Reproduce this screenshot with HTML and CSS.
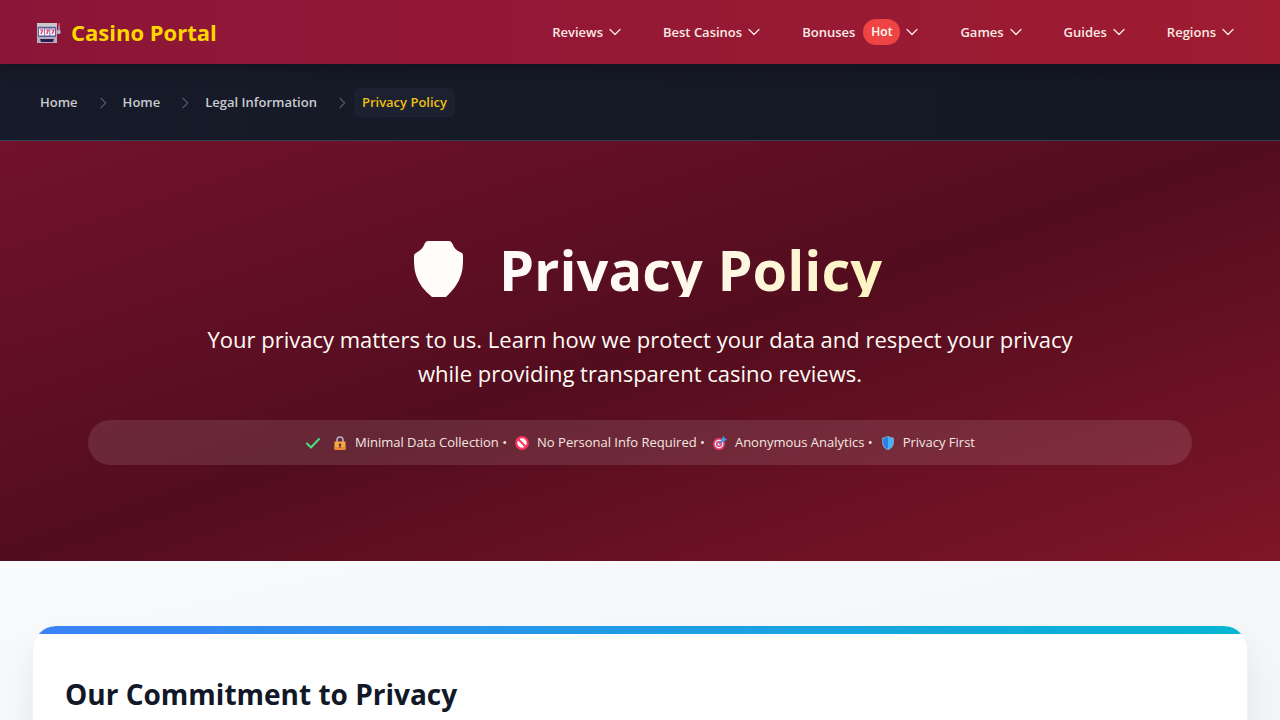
FILE: index.html
```html
<!DOCTYPE html>
<html lang="en">
<head>
<meta charset="utf-8">
<meta name="viewport" content="width=device-width, initial-scale=1">
<title>Privacy Policy - Casino Portal</title>
<link rel="stylesheet" href="styles.css">
</head>
<body>
<svg class="defs" aria-hidden="true">
  <symbol id="down" viewBox="0 0 16 16"><path d="M3 5.500 8 10.500l5-5" fill="none" stroke="currentColor" stroke-width="1.300" stroke-linecap="round" stroke-linejoin="round"/></symbol>
  <symbol id="right" viewBox="0 0 24 24"><path d="m9 5 7 7-7 7" fill="none" stroke="currentColor" stroke-width="2" stroke-linecap="round" stroke-linejoin="round"/></symbol>
</svg>
<header class="header">
  <a class="brand" href="#">
    <svg class="brand-icon" viewBox="0 0 24 22" aria-hidden="true">
      <g transform="translate(0 2)">
      <path d="M20 8h2V2" fill="none" stroke="#a9a3b5" stroke-width="1.500"/>
      <rect x="20" y="7" width="3.500" height="4" rx="1" fill="#b9b3c6"/>
      <circle cx="22" cy="1.500" r="1.500" fill="#e8304f"/>
      <path d="M0 0h20v20H0z" fill="#b3adbd"/>
      <path d="M0 0h20v3H0z" fill="#c9c6cf"/>
      <rect x="1" y="4" width="18" height="10" rx="1" fill="#5a5f99"/>
      <path d="M2 5.500h5v7H2zM7.700 5.500h4.700v7H7.700zM13.200 5.500H18v7h-4.800z" fill="#f6f0fa"/>
      <path d="M3 7h2.700L4 11M8.700 7h2.700l-1.700 4M14.200 7h2.700l-1.700 4" fill="none" stroke="#e8305e" stroke-width="1.200"/>
      <path d="M3 16h14l-1 3H4z" fill="#2c1c52"/>
      </g>
    </svg>
    <span>Casino Portal</span>
  </a>
  <nav class="nav" aria-label="Main">
    <button class="nav-item" type="button">Reviews<svg><use href="#down"/></svg></button>
    <button class="nav-item" type="button">Best Casinos<svg><use href="#down"/></svg></button>
    <button class="nav-item" type="button">Bonuses<span class="hot">Hot</span><svg><use href="#down"/></svg></button>
    <button class="nav-item" type="button">Games<svg><use href="#down"/></svg></button>
    <button class="nav-item" type="button">Guides<svg><use href="#down"/></svg></button>
    <button class="nav-item" type="button">Regions<svg><use href="#down"/></svg></button>
  </nav>
</header>
<nav class="crumbs" aria-label="Breadcrumb">
  <a class="crumb" href="#">Home</a>
  <svg><use href="#right"/></svg>
  <a class="crumb" href="#">Home</a>
  <svg><use href="#right"/></svg>
  <a class="crumb" href="#">Legal Information</a>
  <svg><use href="#right"/></svg>
  <span class="crumb current" aria-current="page">Privacy Policy</span>
</nav>
<main>
  <section class="hero">
    <h1 class="title">
      <svg class="title-shield" viewBox="0 0 49 56" aria-hidden="true"><path d="M14 0h21q2 0 3 2l2 4q1 2 4 4l4 2q1 1 1 3v6q0 14-8 25-3 4-9 10H18Q12 51 8 46 0 35 0 21v-6q0-2 2-3l3-2q3-2 4-4l2-4q1-2 3-2z" fill="#fffcf9"/></svg>
      <span class="title-text">Privacy Policy</span>
    </h1>
    <p class="lead">Your privacy matters to us. Learn how we protect your data and respect your privacy while providing transparent casino reviews.</p>
    <div class="pill">
      <svg class="check" viewBox="0 0 16 16" aria-hidden="true"><path d="m2 8.500 4 4 8-8.500" fill="none" stroke="#4ade80" stroke-width="2" stroke-linecap="round" stroke-linejoin="round"/></svg>
      <ul class="facts">
        <li class="fact"><svg viewBox="0 0 14 14" aria-hidden="true"><path d="M4 7V4a3 3 0 0 1 6 0v3" fill="none" stroke="#b9b0c2" stroke-width="1.600"/><rect x="1.500" y="5.500" width="11" height="8.500" rx="1" fill="#f9a63a"/><path d="M1.500 11h11v2q0 1-1 1h-9q-1 0-1-1z" fill="#ef8a35"/><circle cx="7" cy="8.700" r="1.300" fill="#4c3150"/><path d="M6.400 9h1.200v3H6.400z" fill="#4c3150"/></svg>Minimal Data Collection •</li>
        <li class="fact"><svg viewBox="0 0 14 14" aria-hidden="true"><circle cx="7" cy="7" r="5.800" fill="#fff" stroke="#f8375c" stroke-width="2.200"/><path d="m3 3 8 8" stroke="#f8375c" stroke-width="2.200"/></svg>No Personal Info Required •</li>
        <li class="fact"><svg viewBox="0 0 14 14" aria-hidden="true"><circle cx="6" cy="8" r="6" fill="#e8436f"/><circle cx="6" cy="8" r="4.300" fill="#eee3f2"/><circle cx="6" cy="8" r="3" fill="#df3d70"/><circle cx="6" cy="8" r="1.500" fill="#eee3f2"/><path d="m6 8 5-5" stroke="#2e83cc" stroke-width="1.400"/><path d="m8.500 5 .3-2.500L11 0l.6 2.400L14 3l-2.300 2.300z" fill="#36a5ee"/></svg>Anonymous Analytics •</li>
        <li class="fact"><svg viewBox="0 0 14 14" aria-hidden="true"><path d="M7 0q2 1.800 5.500 2v4Q12.500 11.500 7 14 1.500 11.500 1.500 6V2Q5 1.800 7 0z" fill="#43b4fa" stroke="#8ea2bd" stroke-width=".8"/><path d="M7 .8V13Q2.200 11 2.200 6V2.600Q5 2.400 7 .8z" fill="#327be5"/></svg>Privacy First</li>
      </ul>
    </div>
  </section>
  <section class="content">
    <article class="card">
      <h2 class="card-title">Our Commitment to Privacy</h2>
    </article>
  </section>
</main>
</body>
</html>
```
FILE: styles.css
```css
* { box-sizing: border-box; }
body {
  margin: 0;
  font-family: "Open Sans", "Noto Sans", sans-serif;
  color: #111827;
  background: #f8fafc;
}
h1, h2, p, ul { margin: 0; padding: 0; }
a { color: inherit; text-decoration: none; }
svg { display: block; flex: none; }
.defs { position: absolute; width: 0; height: 0; }

.header {
  position: relative;
  display: flex;
  align-items: center;
  justify-content: space-between;
  height: 64px;
  padding: 0 32px;
  background: linear-gradient(90deg, #8b1538, #9f1c31);
  box-shadow: 0 4px 16px rgba(0, 0, 0, 0.2);
}
.brand {
  display: flex;
  align-items: center;
  gap: 10px;
  padding-left: 5px;
  color: #ffd700;
  font-size: 22px;
  font-weight: 700;
}
.brand-icon { width: 24px; height: 22px; }
.nav { display: flex; gap: 16px; }
.nav-item {
  display: flex;
  align-items: center;
  gap: 4px;
  padding: 0 12px;
  border: 0;
  background: none;
  color: #fbe9e4;
  font: 600 13px/26px "Open Sans", "Noto Sans", sans-serif;
}
.nav-item svg { width: 16px; height: 16px; }
.hot {
  margin-left: 4px;
  padding: 0 8px;
  border-radius: 13px;
  background: #ef4444;
  color: #fff;
  font-size: 12px;
}

.crumbs {
  display: flex;
  align-items: center;
  padding: 24px 32px 23px;
  border-bottom: 1px solid #334155;
  background: linear-gradient(90deg, #171a28, #141724);
  color: #c8cad0;
  font-size: 13px;
  font-weight: 600;
  line-height: 29px;
}
.crumbs svg { width: 16px; height: 16px; margin: 0 4px 0 9px; color: #4b5563; }
.crumb { padding: 0 8px; border-radius: 6px; }
.current { background: #1b212e; color: #eebf14; }

.hero {
  padding: 100px 88px 96px;
  background: linear-gradient(to bottom right, #72122d, #530d1e 50%, #7f1528);
  text-align: center;
}
.title {
  display: flex;
  justify-content: center;
  font-size: 56px;
  line-height: 56px;
  font-weight: 700;
}
.title-shield { width: 49px; height: 56px; margin: 0 36px 0 16px; }
.title-text {
  background: linear-gradient(90deg, #fffafa, #fef8ec 50%, #fdf3bf);
  -webkit-background-clip: text;
  background-clip: text;
  color: transparent;
}
.lead {
  max-width: 896px;
  margin: 25px auto 30px;
  color: #fffbf5;
  font-size: 22px;
  line-height: 34px;
}
.pill {
  display: flex;
  align-items: center;
  justify-content: center;
  gap: 12px;
  padding: 12px 24px;
  border-radius: 24px;
  background: rgba(255, 255, 255, 0.11);
  color: #f5e6e0;
  font-size: 13px;
  line-height: 21px;
}
.check { width: 16px; height: 16px; }
.facts { display: flex; gap: 8px; list-style: none; }
.fact { display: flex; align-items: center; gap: 8px; }
.fact svg { width: 14px; height: 14px; }

.content {
  padding: 65px 32px;
  background: linear-gradient(to bottom right, #f8fafc, #f3f4f6);
}
.card {
  position: relative;
  overflow: hidden;
  padding: 48px 32px;
  border: 1px solid #f1f3f5;
  border-top: 0;
  border-radius: 24px;
  background: linear-gradient(90deg, #3b82f6, #06b6d4) top / 100% 8px no-repeat #fff;
  box-shadow: 0 20px 32px rgba(0, 0, 0, 0.08);
}
.card-title { font-size: 28px; line-height: 40px; font-weight: 700; }
```
